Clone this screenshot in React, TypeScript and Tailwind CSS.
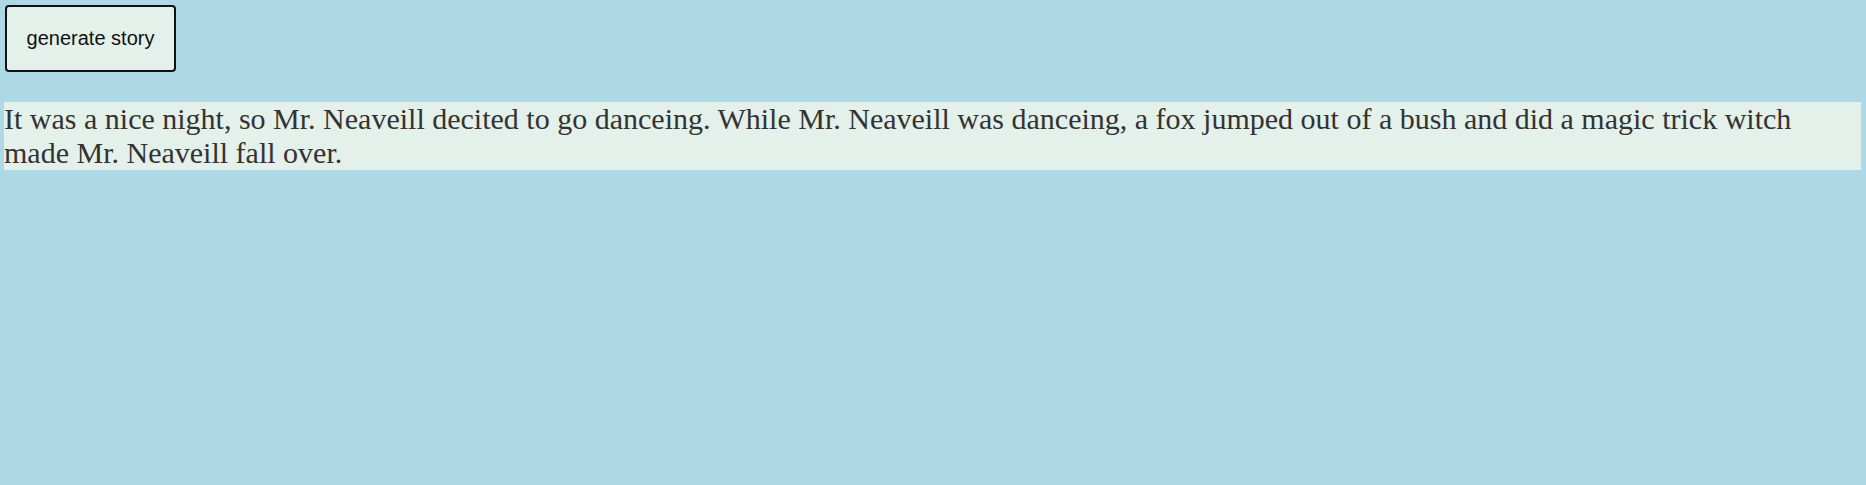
export default function App() {
  return (
    <div className="min-h-[485px] w-full bg-[#add8e6] pl-[4px] pr-[5px] pt-[5px]">
      <button className="ml-[1px] h-[67px] w-[171px] rounded-[4px] border-2 border-[#111] bg-[#e4f0ea] font-['Liberation_Sans',Arial,sans-serif] text-[20px] leading-[23px] text-[#111]">
        generate story
      </button>
      <p className="mt-[30px] bg-[#e4f0ea] font-['Liberation_Serif','Times_New_Roman',serif] text-[30px] leading-[34px] text-[#333]">
        It was a nice night, so Mr. Neaveill decited to go danceing. While Mr. Neaveill was danceing, a fox jumped out of a bush and did a magic trick witch made Mr. Neaveill fall over.
      </p>
    </div>
  );
}
